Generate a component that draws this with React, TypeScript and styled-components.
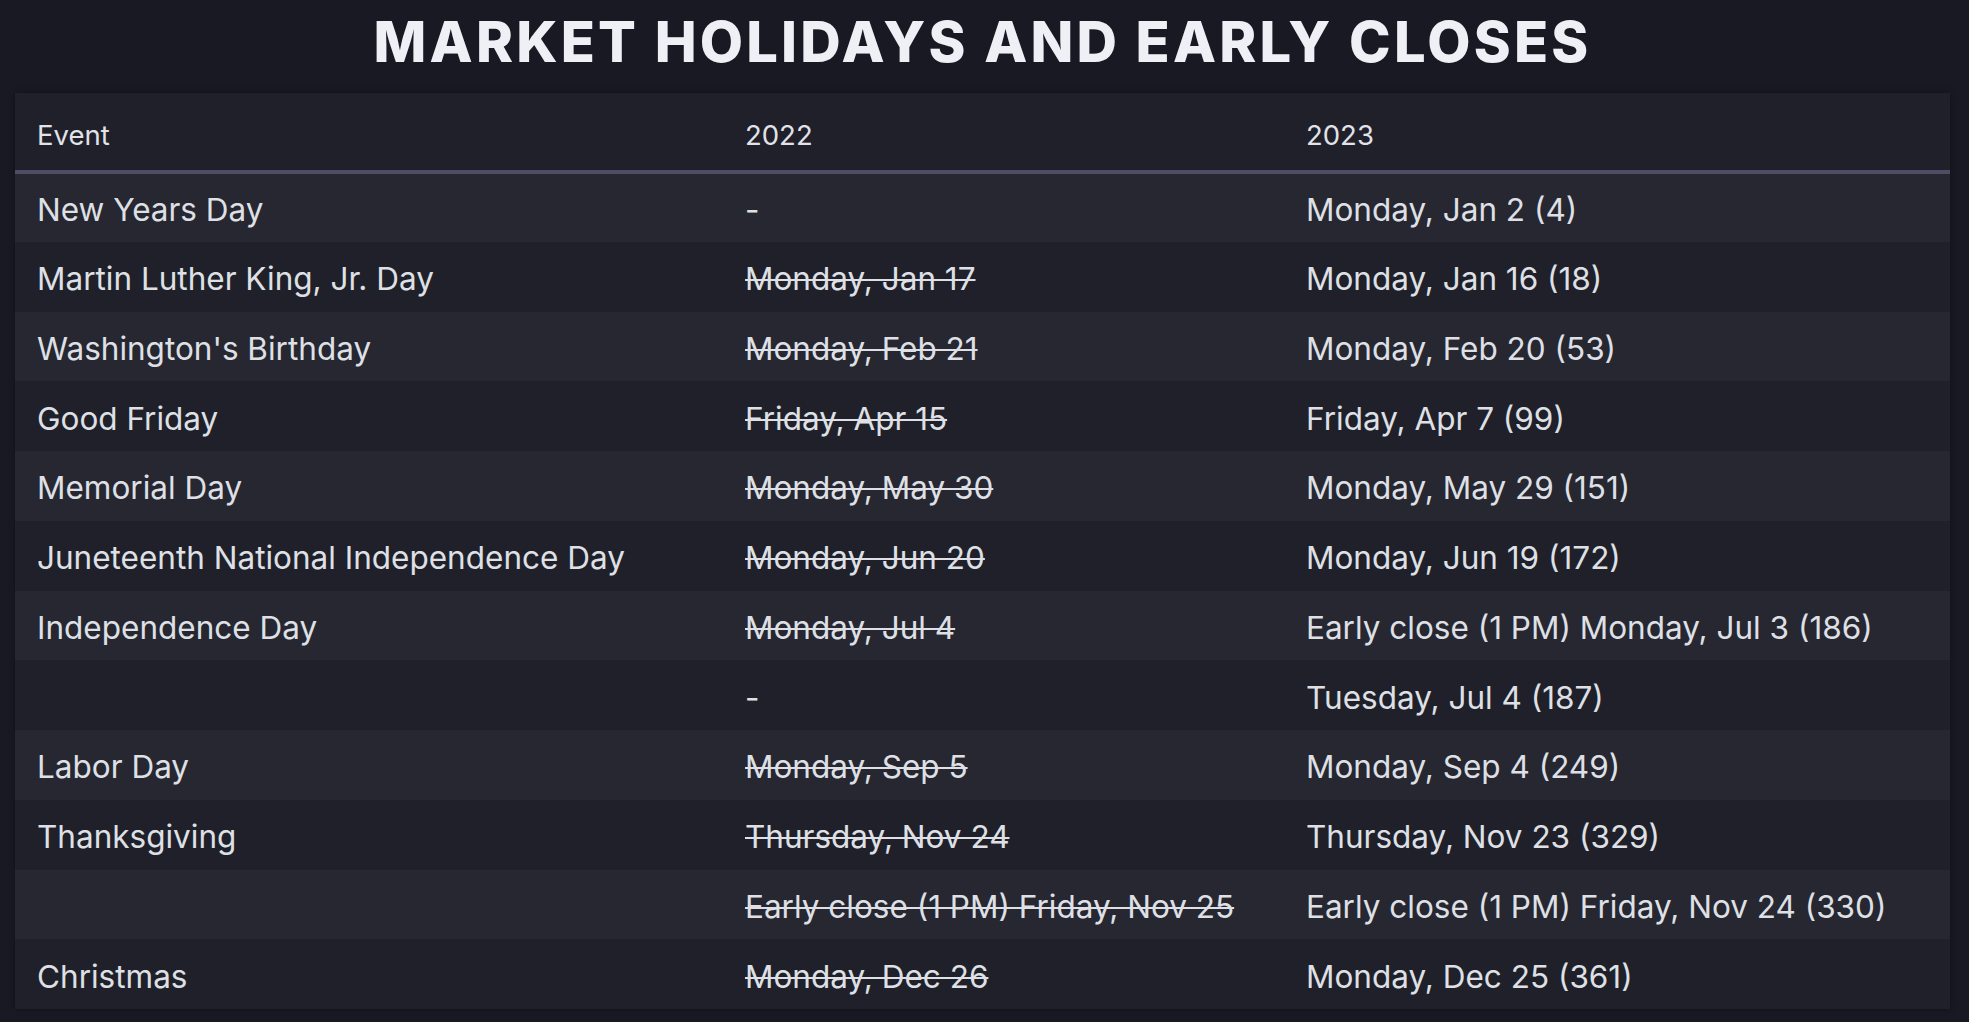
import React from "react";
import styled, { createGlobalStyle } from "styled-components";

const Global = createGlobalStyle`
  html, body { margin: 0; padding: 0; background: #181922; }
  body { font-family: Inter, "Open Sans", sans-serif; color: #dcdde3; }
`;

const Page = styled.div`
  width: 1969px;
  height: 1022px;
  overflow: hidden;
  box-sizing: border-box;
  padding: 0 19px 0 15px;
  background: #181922;
`;

const Title = styled.h1`
  margin: 0;
  padding-top: 14px;
  height: 93px;
  box-sizing: border-box;
  font-family: Inter, sans-serif;
  font-weight: 800;
  font-size: 56px;
  line-height: 56px;
  text-align: center;
  color: #eef0f6;
  letter-spacing: 3.2px;
`;

const Table = styled.table`
  width: 1935px;
  border-collapse: collapse;
  table-layout: fixed;
  background: #1f2029;
  box-shadow: 0 0 6px rgba(0, 0, 0, 0.35);
`;

const HeadCell = styled.th`
  height: 79px;
  box-sizing: border-box;
  padding: 6px 0 0 22px;
  text-align: left;
  font-weight: 400;
  font-size: 27.5px;
  color: #e2e3e9;
  background: #1f2029;
  border-bottom: 4px solid #4d4d63;
`;

const Row = styled.tr<{ $alt: boolean }>`
  height: 69.75px;
  background: ${(p) => (p.$alt ? "#262731" : "#1f2029")};
`;

const Cell = styled.td<{ $struck?: boolean }>`
  padding: 4px 0 0 22px;
  font-size: 31.5px;
  color: #dfe0e6;
  white-space: nowrap;
  text-decoration: ${(p) => (p.$struck ? "line-through" : "none")};
  text-decoration-thickness: 2px;
`;

type Item = { event: string; y22: string; struck: boolean; y23: string };

const rows: Item[] = [
  { event: "New Years Day", y22: "-", struck: false, y23: "Monday, Jan 2 (4)" },
  { event: "Martin Luther King, Jr. Day", y22: "Monday, Jan 17", struck: true, y23: "Monday, Jan 16 (18)" },
  { event: "Washington's Birthday", y22: "Monday, Feb 21", struck: true, y23: "Monday, Feb 20 (53)" },
  { event: "Good Friday", y22: "Friday, Apr 15", struck: true, y23: "Friday, Apr 7 (99)" },
  { event: "Memorial Day", y22: "Monday, May 30", struck: true, y23: "Monday, May 29 (151)" },
  { event: "Juneteenth National Independence Day", y22: "Monday, Jun 20", struck: true, y23: "Monday, Jun 19 (172)" },
  { event: "Independence Day", y22: "Monday, Jul 4", struck: true, y23: "Early close (1 PM) Monday, Jul 3 (186)" },
  { event: "", y22: "-", struck: false, y23: "Tuesday, Jul 4 (187)" },
  { event: "Labor Day", y22: "Monday, Sep 5", struck: true, y23: "Monday, Sep 4 (249)" },
  { event: "Thanksgiving", y22: "Thursday, Nov 24", struck: true, y23: "Thursday, Nov 23 (329)" },
  { event: "", y22: "Early close (1 PM) Friday, Nov 25", struck: true, y23: "Early close (1 PM) Friday, Nov 24 (330)" },
  { event: "Christmas", y22: "Monday, Dec 26", struck: true, y23: "Monday, Dec 25 (361)" },
];

export default function App() {
  return (
    <Page>
      <Global />
      <Title>MARKET HOLIDAYS AND EARLY CLOSES</Title>
      <Table>
        <colgroup>
          <col style={{ width: 708 }} />
          <col style={{ width: 561 }} />
          <col style={{ width: 666 }} />
        </colgroup>
        <thead>
          <tr>
            <HeadCell>Event</HeadCell>
            <HeadCell>2022</HeadCell>
            <HeadCell>2023</HeadCell>
          </tr>
        </thead>
        <tbody>
          {rows.map((r, i) => (
            <Row key={i} $alt={i % 2 === 0}>
              <Cell>{r.event}</Cell>
              <Cell $struck={r.struck}>{r.y22}</Cell>
              <Cell>{r.y23}</Cell>
            </Row>
          ))}
        </tbody>
      </Table>
    </Page>
  );
}
